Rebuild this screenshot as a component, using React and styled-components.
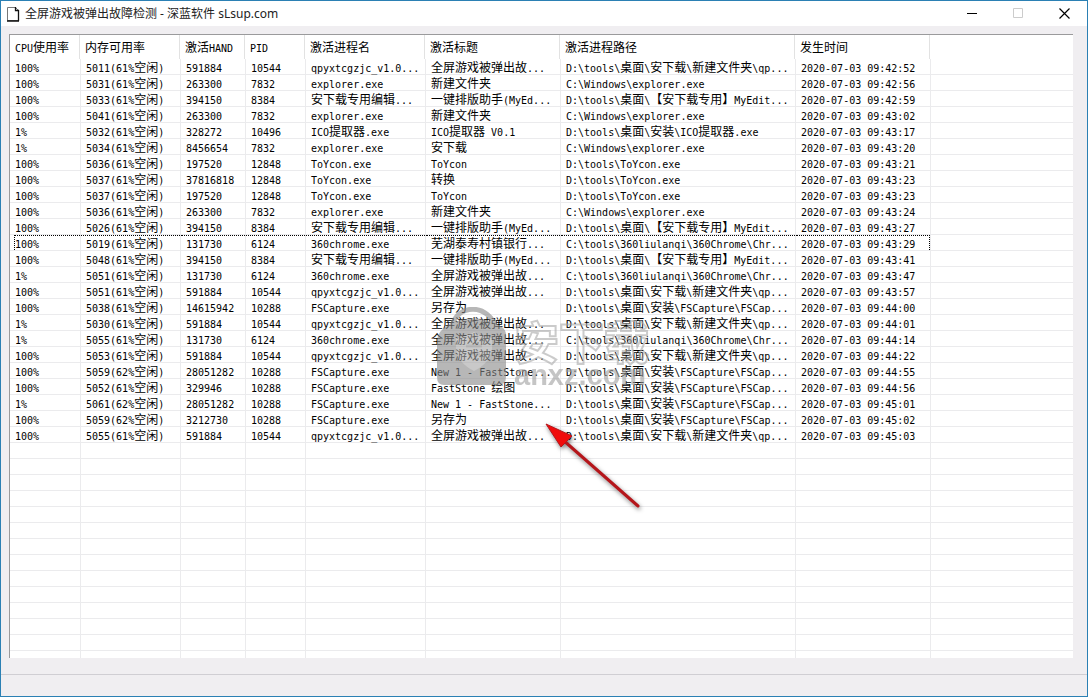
import React from "react";
import styled, { createGlobalStyle } from "styled-components";

const columns = [
  { label: "CPU使用率", width: 70 },
  { label: "内存可用率", width: 100 },
  { label: "激活HAND", width: 65 },
  { label: "PID", width: 60 },
  { label: "激活进程名", width: 120 },
  { label: "激活标题", width: 135 },
  { label: "激活进程路径", width: 235 },
  { label: "发生时间", width: 135 },
];

const QPYX = ["qpyxtcgzjc_v1.0...", "全屏游戏被弹出故...", "D:\\tools\\桌面\\安下载\\新建文件夹\\qp..."];
const EXPLORER = ["explorer.exe", "新建文件夹", "C:\\Windows\\explorer.exe"];
const MYEDIT = ["安下载专用编辑...", "一键排版助手(MyEd...", "D:\\tools\\桌面\\【安下载专用】MyEdit..."];
const CHROME = "C:\\tools\\360liulanqi\\360Chrome\\Chr...";
const TOYCON = "D:\\tools\\ToYcon.exe";
const FSCAP = "D:\\tools\\桌面\\安装\\FSCapture\\FSCap...";

const records = [
  ["100%", "5011(61%空闲)", "591884", "10544", ...QPYX, "09:42:52"],
  ["100%", "5031(61%空闲)", "263300", "7832", ...EXPLORER, "09:42:56"],
  ["100%", "5033(61%空闲)", "394150", "8384", ...MYEDIT, "09:42:59"],
  ["100%", "5041(61%空闲)", "263300", "7832", ...EXPLORER, "09:43:02"],
  ["1%", "5032(61%空闲)", "328272", "10496", "ICO提取器.exe", "ICO提取器 V0.1", "D:\\tools\\桌面\\安装\\ICO提取器.exe", "09:43:17"],
  ["1%", "5034(61%空闲)", "8456654", "7832", "explorer.exe", "安下载", "C:\\Windows\\explorer.exe", "09:43:20"],
  ["100%", "5036(61%空闲)", "197520", "12848", "ToYcon.exe", "ToYcon", TOYCON, "09:43:21"],
  ["100%", "5037(61%空闲)", "37816818", "12848", "ToYcon.exe", "转换", TOYCON, "09:43:23"],
  ["100%", "5037(61%空闲)", "197520", "12848", "ToYcon.exe", "ToYcon", TOYCON, "09:43:23"],
  ["100%", "5036(61%空闲)", "263300", "7832", ...EXPLORER, "09:43:24"],
  ["100%", "5026(61%空闲)", "394150", "8384", ...MYEDIT, "09:43:27"],
  ["100%", "5019(61%空闲)", "131730", "6124", "360chrome.exe", "芜湖泰寿村镇银行...", CHROME, "09:43:29"],
  ["100%", "5048(61%空闲)", "394150", "8384", ...MYEDIT, "09:43:41"],
  ["1%", "5051(61%空闲)", "131730", "6124", "360chrome.exe", "全屏游戏被弹出故...", CHROME, "09:43:47"],
  ["100%", "5051(61%空闲)", "591884", "10544", ...QPYX, "09:43:57"],
  ["100%", "5038(61%空闲)", "14615942", "10288", "FSCapture.exe", "另存为", FSCAP, "09:44:00"],
  ["1%", "5030(61%空闲)", "591884", "10544", ...QPYX, "09:44:01"],
  ["1%", "5055(61%空闲)", "131730", "6124", "360chrome.exe", "全屏游戏被弹出故...", CHROME, "09:44:14"],
  ["100%", "5053(61%空闲)", "591884", "10544", ...QPYX, "09:44:22"],
  ["100%", "5059(62%空闲)", "28051282", "10288", "FSCapture.exe", "New 1 - FastStone...", FSCAP, "09:44:55"],
  ["100%", "5052(61%空闲)", "329946", "10288", "FSCapture.exe", "FastStone 绘图", FSCAP, "09:44:56"],
  ["1%", "5061(62%空闲)", "28051282", "10288", "FSCapture.exe", "New 1 - FastStone...", FSCAP, "09:45:01"],
  ["100%", "5059(62%空闲)", "3212730", "10288", "FSCapture.exe", "另存为", FSCAP, "09:45:02"],
  ["100%", "5055(61%空闲)", "591884", "10544", ...QPYX, "09:45:03"],
];

const FOCUSED = 11;
const emptyRows = Array.from({ length: 60 }, (_, i) => i);

// latin runs are set in a half-width mono face, chinese keeps the full-width one
const MixedText = ({ text }) =>
  text
    .split(/([\x20-\x7e]+)/)
    .filter(Boolean)
    .map((part, i) =>
      /^[\x20-\x7e]/.test(part) ? <Latin key={i}>{part}</Latin> : part
    );

const App = () => {
  return (
    <>
      <GlobalStyle />
      <Window>
        <TitleBar>
          <FileIcon viewBox="0 0 14 16" aria-hidden="true">
            <path d="M1.5 1.5h8l3 3v10h-11z" fill="#fff" stroke="#777" />
            <path d="M9.5 1v3.5H13M12.5 4v11M1 15h12" fill="none" stroke="#111" strokeWidth="1.3" />
          </FileIcon>
          <Title>全屏游戏被弹出故障检测 - 深蓝软件 sLsup.com</Title>
          <CaptionButton aria-label="最小化">
            <svg width="11" height="11" viewBox="0 0 11 11">
              <path d="M0 5.5h10" stroke="#000" />
            </svg>
          </CaptionButton>
          <CaptionButton aria-label="最大化" disabled>
            <svg width="11" height="11" viewBox="0 0 11 11">
              <path d="M.5.5h9v9h-9z" fill="none" stroke="#ccc" />
            </svg>
          </CaptionButton>
          <CaptionButton aria-label="关闭">
            <svg width="11" height="11" viewBox="0 0 11 11">
              <path d="M.5.5l10 10M10.5.5l-10 10" stroke="#000" strokeWidth="1.2" />
            </svg>
          </CaptionButton>
        </TitleBar>

        <Client>
          <ListView>
            <Table>
              <colgroup>
                {columns.map((col) => (
                  <Col key={col.label} $width={col.width} />
                ))}
                <col />
              </colgroup>
              <thead>
                <tr>
                  {columns.map((col) => (
                    <HeadCell key={col.label} scope="col">
                      <MixedText text={col.label} />
                    </HeadCell>
                  ))}
                  <EmptyHead />
                </tr>
              </thead>
              <tbody>
                {records.map((record, r) => (
                  <Row key={r} $focused={r === FOCUSED}>
                    {record.map((value, c) => (
                      <Cell key={c}>
                        <MixedText text={c === 7 ? `2020-07-03 ${value}` : value} />
                      </Cell>
                    ))}
                    <Cell />
                  </Row>
                ))}
                {emptyRows.map((r) => (
                  <Row key={r} aria-hidden="true">
                    {columns.map((col) => (
                      <Cell key={col.label} />
                    ))}
                    <Cell />
                  </Row>
                ))}
              </tbody>
            </Table>
          </ListView>
        </Client>
        <StatusBar />

        <Watermark>
          <Lock viewBox="0 0 72 80" aria-hidden="true">
            <path d="M16 20C20 -4 54 -4 60 22" fill="none" stroke="#888" strokeWidth="5" />
            <path
              fill="#888"
              d="M14 17Q40 4 66 20Q70 23 70 28V70Q70 78 62 78H8Q1 78 1 70V34Q1 24 14 17Z"
            />
            <path
              fill="#a6a6a6"
              d="M38 25Q28 31 20 31V42Q22 56 38 64Q54 56 56 42V31Q48 31 38 25Z"
            />
            <path d="M30 39h16M32 47h12" stroke="#8c8c8c" strokeWidth="3" />
          </Lock>
          <Brand>
            <BrandName>安下载</BrandName>
            <BrandSite>anxz.com</BrandSite>
          </Brand>
        </Watermark>
        <Pointer viewBox="0 0 104 94" aria-hidden="true">
          <path d="M22 21L97 87" stroke="#b5161b" strokeWidth="3" strokeLinecap="round" />
          <path d="M5 5L31 17L20 28Z" fill="#f00b0b" stroke="#b5161b" />
        </Pointer>
      </Window>
    </>
  );
};

export default App;

const GlobalStyle = createGlobalStyle`
  * {
    box-sizing: border-box;
  }
  body {
    margin: 0;
    font-family: "Noto Sans CJK SC", sans-serif;
    font-size: 12px;
    color: #000;
  }
`;

const Window = styled.div`
  position: relative;
  display: flex;
  flex-direction: column;
  height: 100vh;
  border: 1px solid #2b80b4;
  background: #f0eef1;
  overflow: hidden;
`;

const TitleBar = styled.header`
  display: flex;
  align-items: center;
  height: 25px;
  padding-left: 5px;
  background: #fff;
`;

const FileIcon = styled.svg`
  width: 14px;
  height: 16px;
  margin-right: 5px;
`;

const Title = styled.h1`
  flex: 1;
  margin: 0;
  font-family: "Noto Sans", "Noto Sans CJK SC", sans-serif;
  font-size: 12px;
  line-height: 24px;
  font-weight: 400;
  color: #222;
`;

const CaptionButton = styled.button`
  display: flex;
  align-items: center;
  justify-content: center;
  width: 46px;
  height: 25px;
  padding: 0;
  border: 0;
  background: transparent;
`;

const Client = styled.main`
  flex: 1;
  min-height: 0;
  display: flex;
  padding: 8px 14px 16px 8px;
`;

const ListView = styled.div`
  flex: 1;
  overflow: hidden;
  border-top: 1px solid #9a9a9c;
  border-left: 1px solid #9a9a9c;
  background: #fff;
`;

const Table = styled.table`
  width: 100%;
  table-layout: fixed;
  border-collapse: separate;
  border-spacing: 0;
`;

const Col = styled.col`
  width: ${(props) => props.$width}px;
`;

const HeadCell = styled.th`
  height: 24px;
  padding: 0 0 0 5px;
  border-right: 1px solid #e2e2e2;
  font-weight: 400;
  line-height: 24px;
  text-align: left;
  white-space: nowrap;
`;

const EmptyHead = styled.td`
  padding: 0;
`;

const Cell = styled.td`
  position: relative;
  height: 16px;
  padding: 0 0 0 5px;
  border-left: 1px solid #ebebed;
  border-bottom: 1px solid #ebebed;
  line-height: 15px;
  white-space: nowrap;
  &:first-child {
    border-left: 0;
  }
`;

const Row = styled.tr`
  ${(props) =>
    props.$focused &&
    `
    td:not(:last-child)::after {
      content: "";
      position: absolute;
      top: 0;
      right: 0;
      bottom: 0;
      left: 0;
      border-top: 1px dotted #000;
    }
    td:first-child::after {
      left: 4px;
      border-left: 1px dotted #000;
    }
    td:nth-last-child(2)::after {
      border-right: 1px dotted #000;
    }
  `}
`;

// no line-height of its own, so it never makes a row taller
const Latin = styled.span`
  font-family: "DejaVu Sans Mono", monospace;
  font-size: 10px;
  line-height: 0;
`;

const StatusBar = styled.footer`
  height: 22px;
  border-top: 1px solid #d0ced3;
`;

const Watermark = styled.div`
  position: absolute;
  top: 306px;
  left: 435px;
  display: flex;
  gap: 6px;
  opacity: 0.6;
  pointer-events: none;
`;

const Lock = styled.svg`
  width: 72px;
  height: 80px;
`;

const Brand = styled.div`
  padding-top: 10px;
  font-weight: 700;
`;

const BrandName = styled.div`
  font-size: 45px;
  line-height: 48px;
  color: transparent;
  -webkit-text-stroke: 2px #aaa;
`;

const BrandSite = styled.div`
  font-family: "Liberation Sans", Arial, sans-serif;
  font-size: 29px;
  line-height: 20px;
  color: #a0a0a0;
`;

const Pointer = styled.svg`
  position: absolute;
  top: 418px;
  left: 540px;
  width: 104px;
  height: 94px;
  filter: drop-shadow(1px 2px 2px rgba(0, 0, 0, 0.5));
  pointer-events: none;
`;
